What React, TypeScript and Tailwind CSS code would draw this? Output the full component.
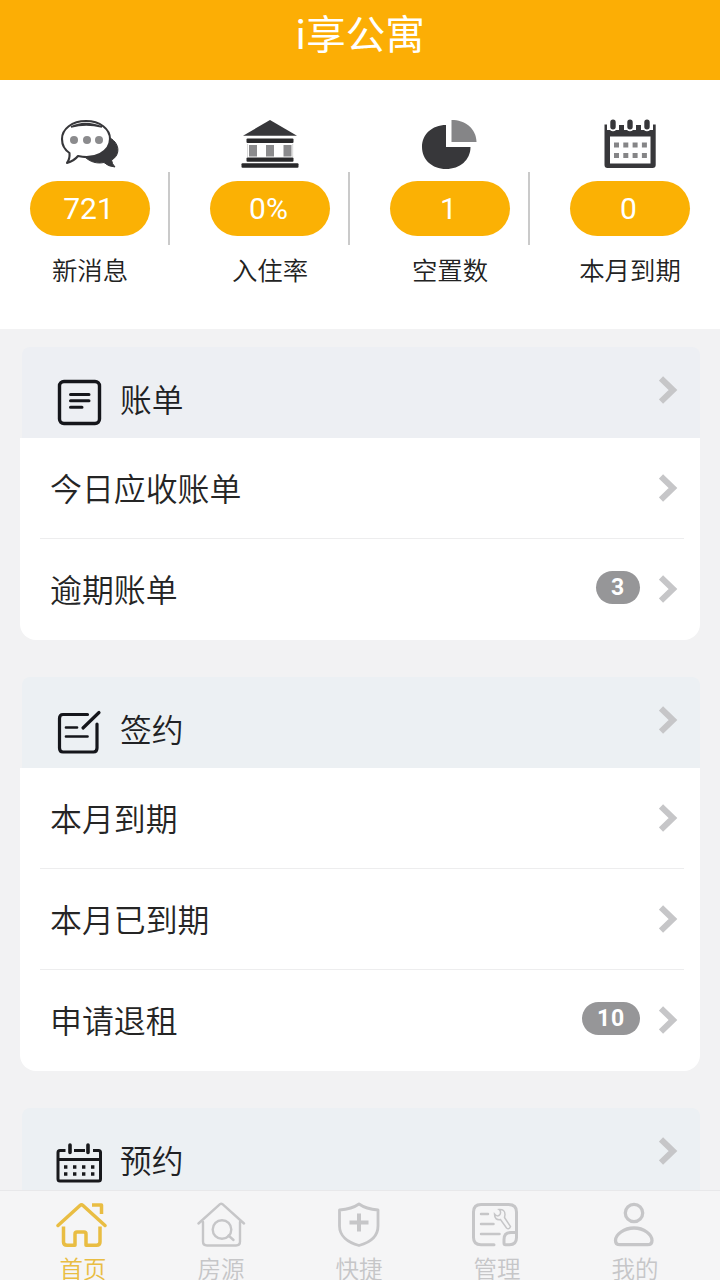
import type { ReactNode } from 'react';

const dark = '#37373a';

function ChatIcon() {
  return (
    <svg width="60" height="52" viewBox="0 0 60 52" fill="none">
      <path d="M48 19C60 24 61 37 51.500 42Q52 46 55 49Q48 48.500 44 44.500C37 46 30 44 25 39C37 38 47 31 48 19Z" fill={dark} stroke={dark} strokeWidth="1" strokeLinejoin="round" />
      <path d="M26 3C12 3 2 11 2 21C2 27 5 32 9.500 35Q10 41 7 45Q14 43 18 38C34 42 50 34 50 21C50 11 40 3 26 3Z" fill="white" stroke={dark} strokeWidth="2.100" strokeLinejoin="round" />
      <path d="M11 9Q25 2 42 9Q26 5 11 9Z" fill={dark} stroke={dark} strokeWidth="1.400" />
      <circle cx="14" cy="22" r="4" fill="#8b8b8d" />
      <circle cx="27" cy="22" r="4" fill="#8b8b8d" />
      <circle cx="39" cy="22" r="4" fill="#8b8b8d" />
    </svg>
  );
}

function BankIcon() {
  return (
    <svg width="60" height="52" viewBox="0 0 60 52">
      <path d="M30 2L57 17.800H3Z" fill={dark} />
      <rect x="6.500" y="20.500" width="47" height="4.500" rx="1" fill="#29292b" />
      <rect x="9" y="27" width="8" height="11.500" fill="#8b8b8d" />
      <rect x="26" y="27" width="8" height="11.500" fill="#8b8b8d" />
      <rect x="43.500" y="27" width="8" height="11.500" fill="#8b8b8d" />
      <path d="M7.500 26V39M52.700 26V39" stroke="#d8d8d8" strokeWidth="1" />
      <rect x="6.500" y="39.500" width="47" height="4.200" rx="1" fill="#29292b" />
      <rect x="1.500" y="45.200" width="57" height="4.600" rx="1" fill="#29292b" />
    </svg>
  );
}

function PieIcon() {
  return (
    <svg width="60" height="52" viewBox="0 0 60 52">
      <path d="M26 7C12 7 2 16.500 2 29C2 41.500 12 51 26 51C40 51 50.500 42 50.500 29H26Z" fill={dark} />
      <path d="M31.500 2C45 2 56 10 56.500 24H31.500Z" fill="#858587" />
    </svg>
  );
}

function StatCalendarIcon() {
  return (
    <svg width="60" height="52" viewBox="0 0 60 52">
      <path d="M4.500 6.500H7V14H19V7H24V14H36V7H41V14H53V6.500H55.700V47Q55.700 50 52.500 50H7.500Q4.500 50 4.500 47Z" fill={dark} />
      <path d="M7 12H53V18H7Z" fill={dark} />
      <path d="M13 4V9M30 4V9M47 4V9" stroke="white" strokeWidth="8.500" strokeLinecap="round" />
      <path d="M13 4.200V8.800M30 4.200V8.800M47 4.200V8.800" stroke={dark} strokeWidth="5.400" strokeLinecap="round" />
      <rect x="10" y="18.500" width="40.500" height="27" fill="white" />
      <path d="M14 27H47.500M14 37.500H47.500" stroke="#858587" strokeWidth="5" strokeDasharray="5 4.300" />
    </svg>
  );
}

function BillIcon() {
  return (
    <svg width="48" height="48" viewBox="0 0 48 48" fill="none" stroke="#15161b" strokeWidth="3.400" strokeLinecap="round">
      <rect x="4.500" y="3.500" width="40" height="42" rx="4.500" />
      <path d="M15.500 16.500H34M15.500 22.700H34M15.500 29.200H27" strokeWidth="3" />
    </svg>
  );
}

function SignIcon() {
  return (
    <svg width="48" height="48" viewBox="0 0 48 48" fill="none" stroke="#15161b" strokeWidth="3.200" strokeLinecap="round">
      <path d="M32.500 6.500H8Q4.500 6.500 4.500 10.500V40Q4.500 44 8 44H38.500Q42 44 42 40V16" />
      <path d="M11 19.500H22M11 28.500H32.500" strokeWidth="2.700" />
      <path d="M28 20L44 4.500" strokeWidth="3.200" />
    </svg>
  );
}

function BookingIcon() {
  return (
    <svg width="48" height="48" viewBox="0 0 48 48" fill="none" stroke="#18191c" strokeWidth="3">
      <path d="M10.500 11.500H5Q3 11.500 3 13.500V40Q3 42 5 42H43.500Q45.500 42 45.500 40V13.500Q45.500 11.500 43.500 11.500H38M19 11.500H30M3 20.500H45.500" />
      <path d="M15 6V13.500M33 6V13.500" strokeWidth="3.600" strokeLinecap="round" />
      <path d="M9 28H42M9 35H42" strokeWidth="3.400" strokeDasharray="3.400 5.600" />
    </svg>
  );
}

function HomeIcon() {
  return (
    <svg width="52" height="48" viewBox="0 0 52 48" fill="none" stroke="currentColor" strokeWidth="3.500" strokeLinejoin="round">
      <path d="M2 23.500L24 3.500Q25.500 2.200 27 3.500L49 23.500" strokeLinecap="round" />
      <path d="M36 3H45.500V12" />
      <path d="M7.500 24.500V40Q7.500 43.200 11 43.200H19V32Q19 30 21 30H28Q30 30 30 32V43.200H40.500Q44 43.200 44 40V24.500" />
    </svg>
  );
}

function HouseSearchIcon() {
  return (
    <svg width="52" height="48" viewBox="0 0 52 48" fill="none" stroke="currentColor" strokeWidth="2.400" strokeLinecap="round" strokeLinejoin="round">
      <path d="M4.500 21.500L26 2.200Q27.200 1.200 28.500 2.200L50 21.500M9 20V39.500Q9 43.500 13 43.500H42Q46 43.500 46 39.500V20" />
      <circle cx="28" cy="27.500" r="9.300" />
      <path d="M34.500 33.500L39.500 38" />
    </svg>
  );
}

function ShieldIcon() {
  return (
    <svg width="52" height="48" viewBox="0 0 52 48" fill="none" stroke="currentColor" strokeWidth="2.800" strokeLinejoin="round">
      <path d="M27 2Q20 7 7.500 8V24C7.500 34 16 40.500 27 43.500C38 40.500 46 34 46 24V8Q34 7 27 2Z" />
      <path d="M17.500 20.500H36.500M27 11.500V29.500" strokeWidth="4" />
    </svg>
  );
}

function ManageIcon() {
  return (
    <svg width="52" height="48" viewBox="0 0 52 48" fill="none" stroke="currentColor" strokeWidth="3" strokeLinecap="round">
      <path d="M24 42.700H11Q3.500 42.700 3.500 35.500V10Q3.500 2.500 11 2.500H38.500Q46.500 2.500 46.500 10V35.500Q46.500 42.700 39.500 42.700H35.500Q34 42.700 34 41V37.500Q34 30.500 41 30.500H46" />
      <path d="M11 12H18M11 22H23.500M11 32H29.500" strokeWidth="2.500" />
      <path d="M29 7.500Q35 7 35 12.500L34.500 15.500L40.500 24.500Q39 28 36.500 26L30.500 17.500Q24.500 18.500 24.500 12Q27.500 15.500 30 12.500Q31.500 9.500 29 7.500Z" strokeWidth="1.500" />
    </svg>
  );
}

function PersonIcon() {
  return (
    <svg width="52" height="48" viewBox="0 0 52 48" fill="none" stroke="currentColor" strokeWidth="3.300">
      <circle cx="26" cy="11" r="8.700" />
      <path d="M26 26C16 26 7.500 32.500 7.500 38.500Q7.500 42.700 12 42.700H39.500Q44 42.700 44 38.500C44 32.500 36 26 26 26Z" />
    </svg>
  );
}

function Chevron() {
  return (
    <svg width="20" height="28" viewBox="0 0 20 28" fill="none" className="shrink-0" stroke="#c6c6c8" strokeWidth="6">
      <path d="M2 2.500L14 14L2 25.500" />
    </svg>
  );
}

function Stat({ icon, value, label, last }: { icon: ReactNode; value: string; label: string; last?: boolean }) {
  return (
    <div className="relative flex w-[180px] flex-col items-center">
      <div className="h-[63px]">{icon}</div>
      <div className="flex h-[55px] w-[120px] items-center justify-center rounded-full bg-[#fbb104] pr-[3px] font-[Roboto] text-[30px] font-normal leading-none text-white">
        {value}
      </div>
      <div className="mt-[16px] whitespace-nowrap text-[25.400px] leading-[34px] text-[#222]">{label}</div>
      {!last && <div className="absolute right-[10px] top-[54px] h-[73px] w-[2px] bg-[#cacaca]" />}
    </div>
  );
}

function Row({ label, badge }: { label: string; badge?: string }) {
  return (
    <div className="flex h-[101px] items-center pb-0.5 pl-[30px] pr-[21px]">
      <span className="flex-1 text-[31.900px] leading-none text-[#252525]">{label}</span>
      {badge && (
        <span className="mb-[2px] mr-[19px] flex h-[33px] min-w-[44px] items-center justify-center rounded-full bg-[#969698] px-[15px] font-[Roboto] text-[23px] font-bold leading-none tracking-[0.8px] text-white">
          {badge}
        </span>
      )}
      <Chevron />
    </div>
  );
}

function Section({ icon, title, tint, children }: { icon: ReactNode; title: string; tint: string; children?: ReactNode }) {
  return (
    <section className="mx-5 shrink-0">
      <div className={`ml-0.5 flex h-[91px] rounded-t-lg pl-[33px] pr-[21px] ${tint}`}>
        <div className="mt-[31px] h-12 w-12">{icon}</div>
        <h2 className="ml-[17px] mt-[33px] flex-1 text-[31.700px] leading-[36px] text-[#202124]">{title}</h2>
        <div className="mt-[29px]"><Chevron /></div>
      </div>
      <div className="rounded-b-2xl bg-white">{children}</div>
    </section>
  );
}

function Divider() {
  return <div className="-mt-px ml-5 mr-4 h-px bg-[#ededee]" />;
}

const tabs = [
  { label: '首页', icon: <HomeIcon />, color: 'text-[#e9bd43]' },
  { label: '房源', icon: <HouseSearchIcon />, color: 'text-[#c6c6c8]' },
  { label: '快捷', icon: <ShieldIcon />, color: 'text-[#c6c6c8]' },
  { label: '管理', icon: <ManageIcon />, color: 'text-[#c6c6c8]' },
  { label: '我的', icon: <PersonIcon />, color: 'text-[#c6c6c8]' },
];

export default function App() {
  return (
    <div className="flex h-[1280px] w-[720px] flex-col overflow-hidden bg-[#f2f2f3] font-['Noto_Sans_CJK_SC',sans-serif] font-[350]">
      <header className="flex h-20 shrink-0 justify-center bg-[#fcae05] pt-[8px] text-[39.500px] font-normal leading-[48px] text-white">
        <h1>i享公寓</h1>
      </header>
      <div className="flex h-[249px] shrink-0 bg-white pt-[38px]">
        <Stat icon={<ChatIcon />} value="721" label="新消息" />
        <Stat icon={<BankIcon />} value="0%" label="入住率" />
        <Stat icon={<PieIcon />} value="1" label="空置数" />
        <Stat icon={<StatCalendarIcon />} value="0" label="本月到期" last />
      </div>
      <main className="flex min-h-0 flex-1 flex-col gap-[37px] overflow-hidden pt-[18px]">
        <Section icon={<BillIcon />} title="账单" tint="bg-[#edeff3]">
          <Row label="今日应收账单" />
          <Divider />
          <Row label="逾期账单" badge="3" />
        </Section>
        <Section icon={<SignIcon />} title="签约" tint="bg-[#ecf0f3]">
          <Row label="本月到期" />
          <Divider />
          <Row label="本月已到期" />
          <Divider />
          <Row label="申请退租" badge="10" />
        </Section>
        <Section icon={<BookingIcon />} title="预约" tint="bg-[#ecf0f3]" />
      </main>
      <nav className="flex h-[90px] shrink-0 border-t border-[#e8e8ea] bg-[#f5f5f6] pl-[14px]">
        {tabs.map((tab) => (
          <div key={tab.label} className={`flex w-[138px] flex-col items-center pt-[11px] ${tab.color}`}>
            <div className="mr-[3px] h-12">{tab.icon}</div>
            <span className="mt-[6px] text-[23.500px] leading-[24px]">{tab.label}</span>
          </div>
        ))}
      </nav>
    </div>
  );
}
